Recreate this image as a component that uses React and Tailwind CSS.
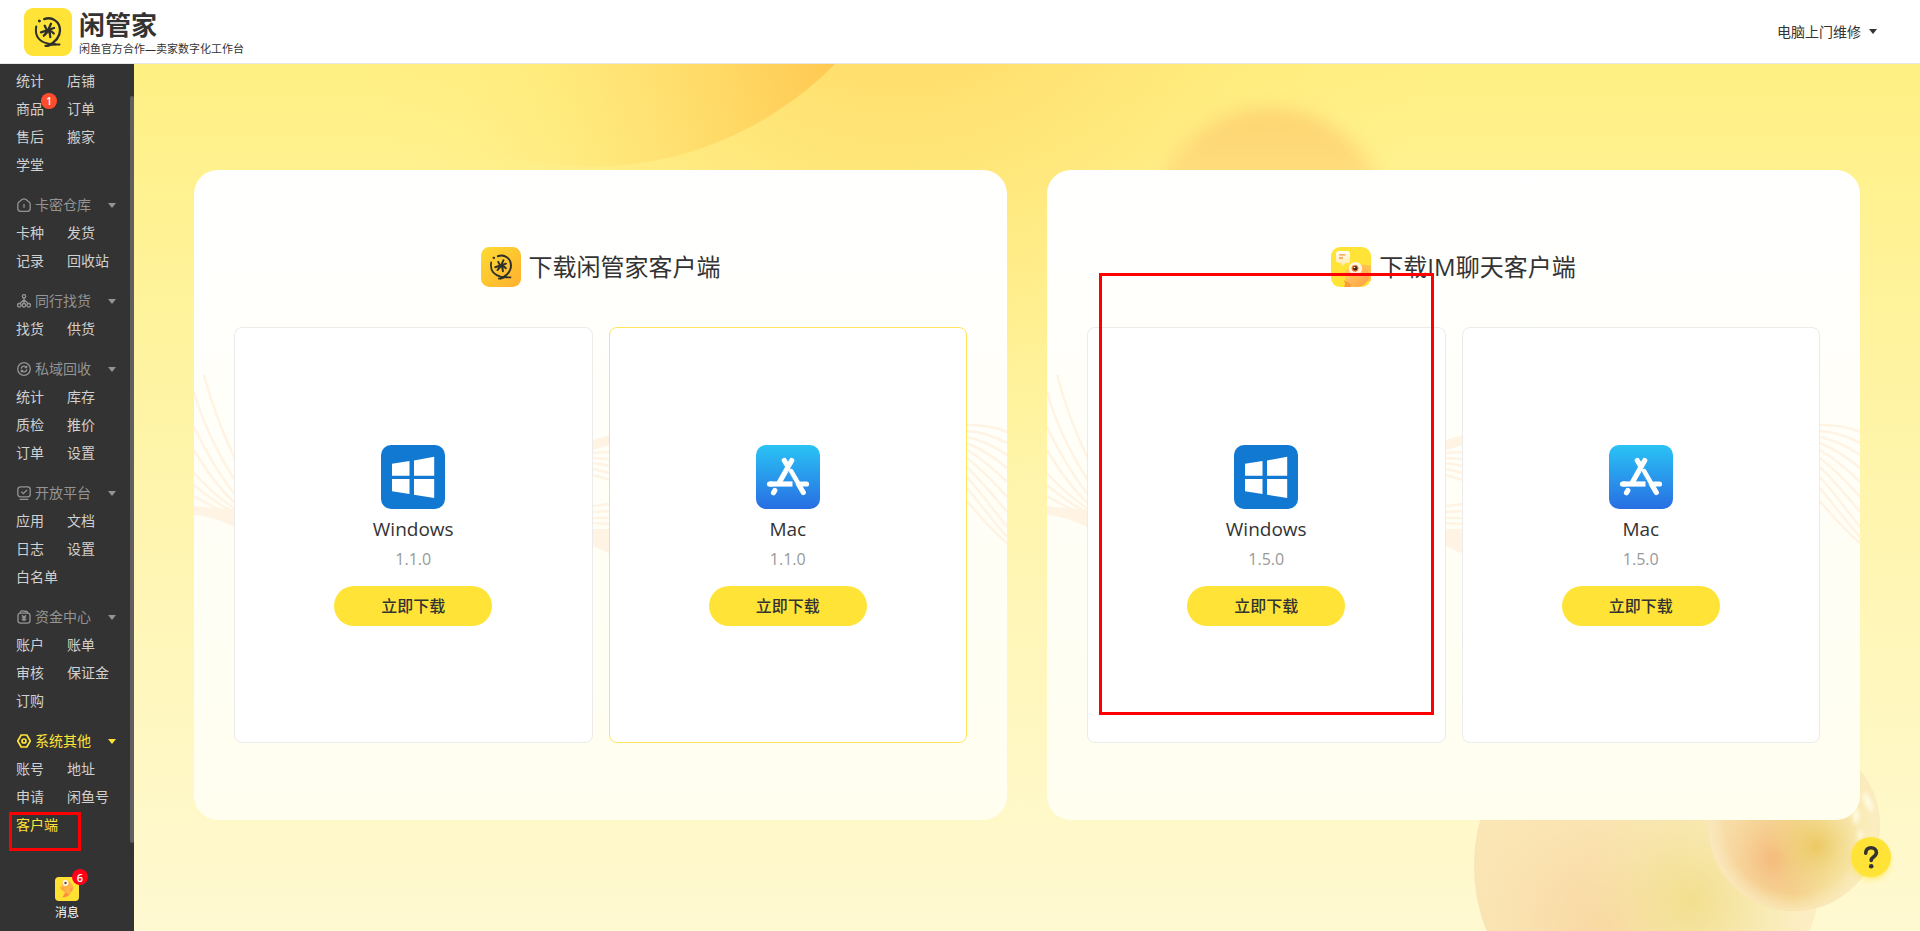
const groups = [
  {
    items: [{ label: '统计' }, { label: '店铺' }, { label: '商品', badge: 1 }, { label: '订单' }, { label: '售后' }, { label: '搬家' }, { label: '学堂' }],
  },
  {
    title: '卡密仓库',
    icon: 'warehouse',
    items: [{ label: '卡种' }, { label: '发货' }, { label: '记录' }, { label: '回收站' }],
  },
  {
    title: '同行找货',
    icon: 'network',
    items: [{ label: '找货' }, { label: '供货' }],
  },
  {
    title: '私域回收',
    icon: 'recycle',
    items: [{ label: '统计' }, { label: '库存' }, { label: '质检' }, { label: '推价' }, { label: '订单' }, { label: '设置' }],
  },
  {
    title: '开放平台',
    icon: 'platform',
    items: [{ label: '应用' }, { label: '文档' }, { label: '日志' }, { label: '设置' }, { label: '白名单' }],
  },
  {
    title: '资金中心',
    icon: 'funds',
    items: [{ label: '账户' }, { label: '账单' }, { label: '审核' }, { label: '保证金' }, { label: '订购' }],
  },
  {
    title: '系统其他',
    icon: 'system',
    active: true,
    items: [{ label: '账号' }, { label: '地址' }, { label: '申请' }, { label: '闲鱼号' }, { label: '客户端', active: true }],
  },
];

const iconPaths = {
  warehouse: (
    <>
      <path d="M3.600 13.300h6.800c1.600 0 2.800-1.200 2.800-2.800V6.400c0-1.100-.5-2-1.400-2.600L9 1.500c-1.300-.9-2.700-.9-4 0L2.200 3.800C1.300 4.400.8 5.300.8 6.400v4.100c0 1.600 1.200 2.800 2.800 2.800z" />
      <path d="M7 6v3.800" />
    </>
  ),
  network: (
    <>
      <circle cx="7" cy="2.300" r="1.700" />
      <circle cx="2.300" cy="11.300" r="1.800" />
      <circle cx="7" cy="11.300" r="1.800" />
      <circle cx="11.700" cy="11.300" r="1.800" />
      <path d="M7 4v5.500M7 5.800 3 9.300M7 5.800l4 3.500" />
    </>
  ),
  recycle: (
    <>
      <circle cx="7" cy="7" r="6.300" />
      <path d="M4.200 6.600C4.500 5 5.700 4.200 7 4.200c1 0 1.900.4 2.400 1.200M9.600 3.700v1.900H7.800M9.800 7.400C9.500 9 8.300 9.800 7 9.800c-1 0-1.900-.4-2.400-1.200M4.400 10.300V8.400h1.800" />
    </>
  ),
  platform: (
    <>
      <rect x="0.8" y="0.8" width="12.400" height="10" rx="2.600" />
      <path d="M4.300 5.600 6.300 7.600 10 4M2.600 13.300h8.800" />
    </>
  ),
  funds: (
    <>
      <path d="M3.400 3.100h7.200c1.400 0 2.400 1 2.400 2.400v5.300c0 1.400-1 2.400-2.400 2.400H3.400C2 13.200 1 12.200 1 10.800V5.500c0-1.400 1-2.400 2.400-2.400zM3.200 2.800c0-1.200.8-2 1.800-1.900l4.600.6c.8.100 1.200.7 1.200 1.500" />
      <path d="M5 5.200l2 2.300 2-2.300M7 7.500v3.800M4.800 7.800h4.400M4.800 9.600h4.400" />
    </>
  ),
  system: (
    <>
      <path d="M4.200 1h5.600L13.300 7 9.800 13H4.200L.7 7z" strokeWidth="1.700" strokeLinejoin="round" />
      <circle cx="7" cy="7" r="2" strokeWidth="1.700" />
    </>
  ),
};

function MenuIcon({ name }) {
  return (
    <svg viewBox="0 0 14 14" className="size-3.5 shrink-0" fill="none" stroke="currentColor" strokeWidth="1.300">
      {iconPaths[name]}
    </svg>
  );
}

function Caret() {
  return (
    <svg viewBox="0 0 8 5" className="h-[5px] w-2 shrink-0" fill="currentColor">
      <path d="M0 0h8L4 5z" />
    </svg>
  );
}

function BrandMark() {
  return (
    <g fill="none" stroke="#2f2f2b" strokeLinecap="round" strokeLinejoin="round">
      <path d="M20.200 11.100C28 8.300 36 13.500 36 22.300c0 7.200-5 12-12.200 15.500" strokeWidth="2.300" />
      <path d="M12.200 18.500C11 26 13.500 33 23.500 35.500c3 .7 4 1.200 12 1" strokeWidth="2" />
      <path d="M21.500 37.800c4 .4 6-2.300 9.500-1.500" strokeWidth="2.200" />
      <circle cx="15.300" cy="13" r="1" fill="#2f2f2b" />
      <path d="M17 24.300 30 20M27 15.800l-2.600 5.700c-.9 2.200-2.400 4.300-4.600 6.200M24.300 22c1.300 2 1.900 4.300 2 7.200M25.500 22.500c1.700.6 3 1.600 4.300 3M20.700 17.800l1.500 3" strokeWidth="2.300" />
    </g>
  );
}

function Logo() {
  return (
    <svg viewBox="0 0 48 48" className="size-12 shrink-0">
      <rect width="48" height="48" rx="9" fill="#ffe437" />
      <BrandMark />
    </svg>
  );
}

function ManagerIcon() {
  return (
    <svg viewBox="0 0 48 48" className="size-10 shrink-0">
      <defs>
        <linearGradient id="manager" x1="0" y1="0" x2="1" y2="1">
          <stop offset="0" stopColor="#fddb33" />
          <stop offset="1" stopColor="#ffb02e" />
        </linearGradient>
      </defs>
      <rect width="48" height="48" rx="10" fill="url(#manager)" />
      <BrandMark />
    </svg>
  );
}

function ChatIcon() {
  return (
    <svg viewBox="0 0 40 40" className="size-10 shrink-0">
      <defs>
        <clipPath id="chat-clip">
          <rect width="40" height="40" rx="9" />
        </clipPath>
        <linearGradient id="chat-fish" x1="0" y1="0" x2="1" y2="1">
          <stop offset="0" stopColor="#ffd365" />
          <stop offset="1" stopColor="#ff9f43" />
        </linearGradient>
        <linearGradient id="chat-bubble" x1="0" y1="0" x2="0" y2="1">
          <stop offset="0" stopColor="#fffdf5" />
          <stop offset="1" stopColor="#ffeaa8" />
        </linearGradient>
      </defs>
      <g clipPath="url(#chat-clip)">
        <rect width="40" height="40" fill="#ffe437" />
        <path d="M29 18c5-1 8 1 11 0v16c-4 1-7-1-8-4z" fill="#ffc052" />
        <path d="M15 24c3-6 12-9 18-5 5 4 7 12 2 17-4 5-13 5-18 1-3-3-3-8-2-13z" fill="url(#chat-fish)" />
        <path d="M15 25.500l-2.500.8 2.500 1.500z" fill="#ff8a35" />
        <path d="M12.500 33l5 2.500c2 1 3 3 3 5h-8c1.500-2 2-3.500 1.200-5z" fill="#ff9a3a" />
        <circle cx="24.500" cy="21.500" r="6.600" fill="#fff6dc" />
        <circle cx="24" cy="21.300" r="3.400" fill="#e87a34" />
        <circle cx="24.200" cy="21.300" r="2.200" fill="#4a2413" />
        <circle cx="23.500" cy="20.500" r="0.800" fill="#fff" />
        <path d="M8 4h8c2 0 3 1 3 3v6c0 2-1 3-3 3h-1.500L12 19l-2.500-3H8c-2 0-3-1-3-3V7c0-2 1-3 3-3z" fill="url(#chat-bubble)" />
        <path d="M8 7.800h6.500M8 11h4" stroke="#ff9440" strokeWidth="1.300" />
      </g>
    </svg>
  );
}

function MessageIcon() {
  return (
    <svg viewBox="0 0 24 24" className="size-6">
      <rect width="24" height="24" rx="4" fill="#ffe033" />
      <path d="M7.500 5C10 2.500 15 3 17 7c1.500 3 1 6.500-1.500 9.500-1 1.200-2 2.200-3 2.800l-2.500-3.500c-3-2-4-6.500-2.500-10.800z" fill="#ffb347" />
      <path d="M10.500 15.500l3.500 2c-1 1.800-3 2.800-6.500 3 1-1.500 1-3 3-5z" fill="#ff8d3a" />
      <path d="M5 10c.5 2.800 2.500 4 5.500 4L9 10.500z" fill="#ffa43e" />
      <path d="M15 11c2 .5 2.500-1 3-2 .5 3-.5 5-3 5.500z" fill="#ff9d42" />
      <circle cx="10.500" cy="6" r="2.900" fill="#fffbe9" />
      <circle cx="10.500" cy="6" r="1.200" fill="#5b4a35" />
    </svg>
  );
}

function WindowsIcon() {
  return (
    <svg viewBox="0 0 64 64" className="size-16">
      <rect width="64" height="64" rx="10" fill="#1279d3" />
      <path
        fill="#fff"
        d="M11 18.700 28.500 16v14.700H11zM33 15.500 53.200 11.800v18.900H33zM11 34h17.500v15L11 46.300zM33 34h20.200v19L33 49.700z"
      />
    </svg>
  );
}

function MacIcon() {
  return (
    <svg viewBox="0 0 64 64" className="size-16">
      <defs>
        <linearGradient id="mac" x1="0" y1="0" x2="0" y2="1">
          <stop offset="0" stopColor="#2ac3f5" />
          <stop offset="1" stopColor="#286ee2" />
        </linearGradient>
      </defs>
      <rect width="64" height="64" rx="10" fill="url(#mac)" />
      <g fill="none" stroke="#fff" strokeWidth="5.200" strokeLinecap="round">
        <path d="M35.700 15.500 23 38" />
        <path d="M28.300 15.500 31 20" />
        <path d="M35 26.500 47.300 47.500" />
        <path d="M13.500 39H36.500" strokeLinecap="butt" />
        <path d="M13.500 39h2M45 39h5.500" />
        <path d="M18.800 45.500 17.500 47.700" />
      </g>
      <path d="M32.300 26.500l7.500 13" stroke="#2c97ec" strokeWidth="1" />
    </svg>
  );
}

const platformIcons = { Windows: WindowsIcon, Mac: MacIcon };

function Backdrop() {
  return (
    <svg className="absolute top-0 right-0 h-[867px] w-[1786px]" viewBox="134 64 1786 867" aria-hidden="true">
      <defs>
        <linearGradient id="disc" gradientUnits="userSpaceOnUse" x1="835" y1="60" x2="450" y2="140">
          <stop offset="0" stopColor="#ffc951" />
          <stop offset="0.300" stopColor="#ffd966" />
          <stop offset="1" stopColor="#fff084" stopOpacity="0" />
        </linearGradient>
        <radialGradient id="glow" gradientUnits="userSpaceOnUse" cx="900" cy="-80" r="580">
          <stop offset="0" stopColor="#ffdc69" />
          <stop offset="0.280" stopColor="#ffde6c" stopOpacity="0.900" />
          <stop offset="0.550" stopColor="#ffe475" stopOpacity="0.550" />
          <stop offset="1" stopColor="#fff084" stopOpacity="0" />
        </radialGradient>
        <linearGradient id="sun" x1="0" y1="0" x2="0" y2="1">
          <stop offset="0" stopColor="#fdd471" />
          <stop offset="0.300" stopColor="#ffdd7c" />
          <stop offset="1" stopColor="#ffe588" />
        </linearGradient>
        <radialGradient id="ball-orange" gradientUnits="userSpaceOnUse" cx="1610" cy="925" r="160">
          <stop offset="0" stopColor="#f9d5a0" />
          <stop offset="1" stopColor="#fbe6b8" stopOpacity="0.400" />
        </radialGradient>
        <radialGradient id="ball-yellow" gradientUnits="userSpaceOnUse" cx="1690" cy="900" r="110">
          <stop offset="0" stopColor="#f2df8e" />
          <stop offset="1" stopColor="#f5eba8" stopOpacity="0" />
        </radialGradient>
        <linearGradient id="ball-edge" x1="0" y1="0" x2="1" y2="0">
          <stop offset="0" stopColor="#fae5b2" />
          <stop offset="0.600" stopColor="#f8ebb2" />
          <stop offset="1" stopColor="#fcf4cb" />
        </linearGradient>
        <linearGradient id="orb" x1="0" y1="0" x2="1" y2="0">
          <stop offset="0" stopColor="#f9deaf" />
          <stop offset="0.500" stopColor="#f3d389" />
          <stop offset="1" stopColor="#fbf2c2" />
        </linearGradient>
        <radialGradient id="orb-orange" gradientUnits="userSpaceOnUse" cx="1776" cy="858" r="56">
          <stop offset="0" stopColor="#f5b679" />
          <stop offset="1" stopColor="#f7cf98" stopOpacity="0" />
        </radialGradient>
        <radialGradient id="orb-gold" gradientUnits="userSpaceOnUse" cx="1816" cy="846" r="50">
          <stop offset="0" stopColor="#ebc963" />
          <stop offset="1" stopColor="#f2df8e" stopOpacity="0" />
        </radialGradient>
        <radialGradient id="orb-rim">
          <stop offset="0.800" stopColor="#fbecc0" stopOpacity="0" />
          <stop offset="1" stopColor="#fbeabf" stopOpacity="0.800" />
        </radialGradient>
        <filter id="soft" x="-20%" y="-20%" width="140%" height="140%">
          <feGaussianBlur stdDeviation="9" />
        </filter>
        <filter id="shine" x="-100%" y="-100%" width="300%" height="300%">
          <feGaussianBlur stdDeviation="2" />
        </filter>
      </defs>
      <circle cx="900" cy="-80" r="580" fill="url(#glow)" />
      <circle cx="589" cy="-178" r="345" fill="url(#disc)" />
      <circle cx="1270" cy="226" r="118" fill="url(#sun)" filter="url(#soft)" />
      <circle cx="1648" cy="866" r="174" fill="url(#ball-edge)" />
      <circle cx="1648" cy="866" r="174" fill="url(#ball-orange)" />
      <circle cx="1648" cy="866" r="174" fill="url(#ball-yellow)" />
      <circle cx="1794" cy="825" r="86" fill="url(#orb)" />
      <circle cx="1794" cy="825" r="86" fill="url(#orb-orange)" />
      <circle cx="1794" cy="825" r="86" fill="url(#orb-gold)" />
      <circle cx="1794" cy="825" r="86" fill="url(#orb-rim)" />
      <g fill="#fffce8" filter="url(#shine)">
        <ellipse cx="1868" cy="802" rx="3" ry="10" transform="rotate(-25 1868 802)" />
        <ellipse cx="1856" cy="816" rx="3" ry="8" />
        <ellipse cx="1860" cy="835" rx="2" ry="6" />
      </g>
    </svg>
  );
}

function Waves() {
  return (
    <svg className="absolute inset-0 size-full" viewBox="0 0 813 650" preserveAspectRatio="none" fill="none" stroke="#fff3e3" strokeWidth="2.500" aria-hidden="true">
      <path d="M10 205C18 235 28 262 42 291" />
      <path d="M0 222C8 250 24 284 42 312" />
      <path d="M0 257C12 282 26 306 42 326" />
      <path d="M0 280C12 300 26 320 42 334" />
      <path d="M0 303C12 316 26 330 42 339" />
      <path d="M0 315C12 325 26 336 42 343" />
      <path d="M0 326C14 334 28 342 42 347" />
      <path d="M0 336C14 338 28 339 42 339V358C28 351 14 346 0 345z" fill="#fff3e3" stroke="none" />
      <path d="M399 270 416 265V275L399 280z" fill="#fff3e3" stroke="none" />
      <path d="M399 283 416 282M399 288l17 1M399 293l17 3M399 299l17 4M399 305l17 5" />
      <path d="M399 336l17-2M399 342l17-1M399 348l17 0M399 353l17 1" />
      <path d="M399 359H416V384L399 376z" fill="#fff3e3" stroke="none" />
      <path d="M773 255C787 255 800 256 813 262" />
      <path d="M773 261C787 262 800 266 813 273" />
      <path d="M773 267C787 270 800 276 813 285" />
      <path d="M773 273C787 279 800 287 813 298" />
      <path d="M773 280C787 288 800 299 813 312" />
      <path d="M773 288C787 299 800 312 813 327" />
      <path d="M773 297C787 311 800 326 813 342" />
      <path d="M773 307C787 323 800 340 813 357" />
      <path d="M773 318C787 335 800 352 813 367" />
      <path d="M773 331C787 348 800 362 813 373" />
    </svg>
  );
}

function DownloadCard({ platform, version, highlighted }) {
  const Icon = platformIcons[platform];
  return (
    <section
      className={`flex min-h-[416px] flex-1 flex-col items-center justify-center rounded-lg border bg-white pt-px ${highlighted ? 'border-[#ffe45c]' : 'border-[#ebebeb]'}`}
    >
      <Icon />
      <h3 className="mt-1.5 text-[19px] leading-7 text-[#333]">{platform}</h3>
      <p className="mt-1 text-base leading-6 text-[#999]">{version}</p>
      <button type="button" className="mt-[15px] h-10 w-[158px] rounded-full bg-[#ffe437] text-base font-medium text-[#333]">
        立即下载
      </button>
    </section>
  );
}

function ClientPanel({ icon, title, version, highlighted, children }) {
  return (
    <div className="relative flex min-h-[650px] flex-1 flex-col justify-center rounded-3xl bg-linear-to-b from-white to-[#fffeef] px-10">
      <Waves />
      <div className="relative flex items-center justify-center gap-2">
        {icon}
        <h2 className="text-2xl leading-10 text-[#333]">{title}</h2>
      </div>
      <div className="relative mt-10 flex gap-4">
        <DownloadCard platform="Windows" version={version} />
        <DownloadCard platform="Mac" version={version} highlighted={highlighted} />
      </div>
      {children}
    </div>
  );
}

function MenuGroup({ title, icon, active, items }) {
  return (
    <div className="mb-3">
      {title && (
        <button
          type="button"
          className={`flex h-7 w-full items-center pr-4 pl-px text-sm ${active ? 'text-[#ffe437]' : 'text-[#949494]'}`}
        >
          <MenuIcon name={icon} />
          <span className="mr-auto ml-1">{title}</span>
          <Caret />
        </button>
      )}
      <ul className="grid grid-cols-[51px_1fr] text-sm leading-7">
        {items.map((item) => (
          <li key={item.label} className="whitespace-nowrap">
            <a href="#" className={`relative inline-block ${item.active ? 'text-[#ffe437]' : 'text-[#d0d0d0]'}`}>
              {item.label}
              {item.badge && (
                <span className="absolute -top-0.5 left-[25px] flex size-4 items-center justify-center rounded-full bg-[#ff4d2e] text-[10px] leading-none font-semibold text-white">
                  {item.badge}
                </span>
              )}
              {item.active && <span className="absolute top-px -left-[7px] h-[39px] w-[72px] border-3 border-[#ff0000]" />}
            </a>
          </li>
        ))}
      </ul>
    </div>
  );
}

function Sidebar() {
  return (
    <aside className="relative flex w-[134px] shrink-0 flex-col bg-[#333]">
      <nav className="flex-1 pt-[3px] pr-[2px] pl-4">
        {groups.map((group, index) => (
          <MenuGroup key={index} {...group} />
        ))}
      </nav>
      <div className="absolute top-8 right-0 h-[747px] w-1 rounded-full bg-[#5f5f5f]" />
      <a href="#" className="mb-2 flex flex-col items-center text-xs leading-5 text-white">
        <span className="relative mb-0.5">
          <MessageIcon />
          <span className="absolute -top-2 left-[17px] flex size-4 items-center justify-center rounded-full bg-[#ff0018] text-[11px] leading-none font-semibold">
            6
          </span>
        </span>
        消息
      </a>
    </aside>
  );
}

function App() {
  return (
    <div className="flex min-h-screen flex-col font-['Open_Sans','Noto_Sans_CJK_SC',sans-serif] text-[#333]">
      <header className="flex h-16 items-center border-b border-[#e8e8e8] bg-white pr-[43px] pl-6">
        <Logo />
        <div className="ml-[7px] pt-0.5">
          <h1 className="text-[26px] leading-8 font-bold">闲管家</h1>
          <p className="text-[11px] leading-4">闲鱼官方合作—卖家数字化工作台</p>
        </div>
        <button type="button" className="ml-auto flex items-center gap-2 text-sm">
          电脑上门维修
          <Caret />
        </button>
      </header>

      <div className="flex flex-1">
        <Sidebar />
        <main className="relative flex-1 overflow-hidden bg-linear-to-b from-[#fff083] to-[#fff9d2] px-[60px] pt-[106px]">
          <Backdrop />
          <div className="relative flex gap-10">
            <ClientPanel icon={<ManagerIcon />} title="下载闲管家客户端" version="1.1.0" highlighted />
            <ClientPanel icon={<ChatIcon />} title="下载IM聊天客户端" version="1.5.0">
              <div className="absolute top-[103px] left-[52px] h-[442px] w-[335px] border-3 border-[#ff0000]" />
            </ClientPanel>
          </div>
        </main>
      </div>

      {/* Help bubble */}
      <button
        type="button"
        aria-label="帮助"
        className="fixed right-[29px] bottom-[54px] flex size-10 items-center justify-center rounded-full bg-[#ffe437] shadow-md shadow-yellow-300/40"
      >
        <svg viewBox="0 0 16 24" className="h-6 w-4" fill="none" stroke="#333" strokeWidth="3.600" strokeLinecap="round">
          <path d="M2.700 8.200C2.700 4.600 5 2.700 8 2.700s5.400 2 5.400 4.900c0 2.400-1.500 3.400-3 4.500C8.800 13.200 8.200 14 8.200 15.500" />
          <circle cx="8.200" cy="21.300" r="2.300" fill="#333" stroke="none" />
        </svg>
      </button>
    </div>
  );
}

export default App;
